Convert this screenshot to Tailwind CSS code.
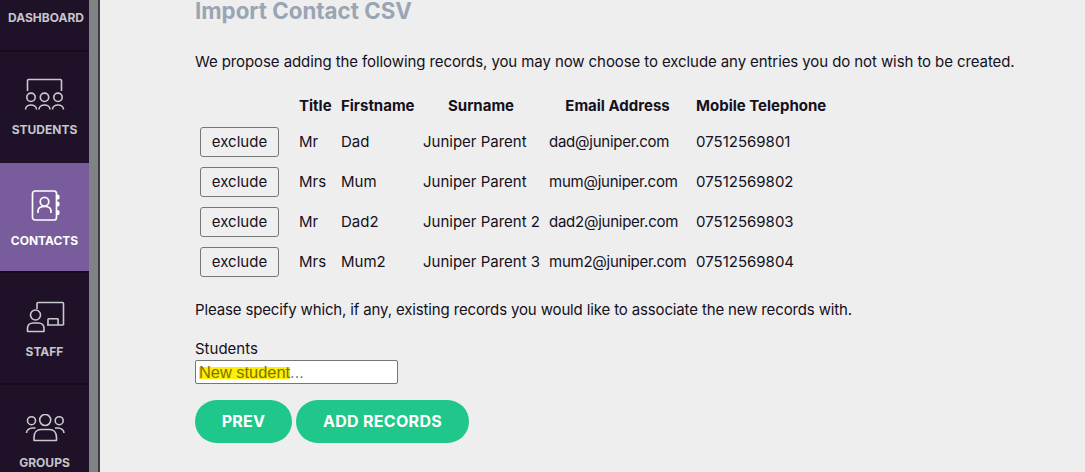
<!DOCTYPE html>
<html><head><meta charset="utf-8">
<script src="https://cdn.jsdelivr.net/npm/@tailwindcss/browser@4"></script>
</head>
<body class="m-0 overflow-hidden">
<div class="flex h-[472px] w-[1085px] overflow-hidden bg-[#eeeeee] font-['Inter','Liberation_Sans',sans-serif] text-[15px] text-[#14101c]">
  <aside class="flex h-[472px] w-[89px] shrink-0 flex-col overflow-hidden bg-[#1f1128] text-[12px] font-bold leading-[16px] text-[#c4c6cc]">
    <div class="flex h-[52px] shrink-0 items-start justify-center border-b-2 border-[#170c1f] pl-[3px] pt-[10px]"><span>DASHBOARD</span></div>
    <div class="flex h-[111px] shrink-0 flex-col items-center pt-[26px]">
      <svg width="41" height="33" viewBox="0 0 41 33" fill="none" stroke="#c9cace" stroke-width="1.6"><path d="M3.500 13V2.500a1 1 0 0 1 1-1h32a1 1 0 0 1 1 1V13"/><circle cx="7" cy="19.300" r="4.200"/><circle cx="20.500" cy="19.300" r="4.200"/><circle cx="34" cy="19.300" r="4.200"/><path d="M1.500 31.500c0-6 11-6 11 0M15 31.500c0-6 11-6 11 0M28.500 31.500c0-6 11-6 11 0"/></svg>
      <span class="mt-[11px]">STUDENTS</span>
    </div>
    <div class="flex h-[108px] shrink-0 flex-col items-center bg-[#785c9c] pt-[27px] text-white">
      <svg width="30" height="32" viewBox="0 0 30 32" fill="none" stroke="#ffffff" stroke-width="1.700"><rect x="2.500" y="1" width="24" height="29" rx="2.500"/><circle cx="14.500" cy="11.700" r="4.300"/><path d="M8 23v-2c0-4 3-4.500 6.500-4.500s6.500 .5 6.500 4.500v2"/><path d="M28 6v2M28 13v2M28 21.500v2" stroke-width="3" stroke-linecap="round"/></svg>
      <span class="mt-[11px]">CONTACTS</span>
    </div>
    <div class="flex h-[114px] shrink-0 flex-col items-center border-b-2 border-t-2 border-[#170c1f] pt-[28px]">
      <svg width="40" height="32" viewBox="0 0 40 32" fill="none" stroke="#c9cace" stroke-width="1.600"><path d="M12 8V2.500a1 1 0 0 1 1-1h24.500a1 1 0 0 1 1 1V24"/><circle cx="10.500" cy="14" r="5"/><path d="M2.500 30.500v-3c0-3.500 2.500-5.500 5.500-5.500h5.500c3 0 5.500 2 5.500 5.500v3z" stroke-linejoin="round"/><path d="M23 24v-5.500a.8.8 0 0 1 .8-.8h8.500a.8.8 0 0 1 .8.8V24M22 24h16.500"/></svg>
      <span class="mt-[11px]">STAFF</span>
    </div>
    <div class="flex flex-1 flex-col items-center pt-[29px]">
      <svg width="40" height="28" viewBox="0 0 40 28" fill="none" stroke="#c9cace" stroke-width="1.600"><circle cx="6.500" cy="6.700" r="4"/><circle cx="20.200" cy="6" r="5.500"/><circle cx="34.200" cy="6.700" r="4"/><path d="M1.500 19c0-3 3-5 6-5h3M39 19c0-3-3-5-6-5h-3"/><path d="M9 26.500v-3c0-5 3-8 7-8h8.500c4 0 7 3 7 8v3z" stroke-linejoin="round"/></svg>
      <span class="mt-[13px]">GROUPS</span>
    </div>
  </aside>
  <div class="h-full w-[9px] shrink-0 bg-[#808285]"></div>
  <div class="h-full w-[2px] shrink-0 bg-[#3b3f44]"></div>
  <main class="min-w-0 flex-1 pl-[95px]">
    <h1 class="text-[22.300px] font-bold leading-[22px] text-[#9aa5b4]">Import Contact CSV</h1>
    <p class="mt-[30px] leading-[20px] tracking-[-0.09px]">We propose adding the following records, you may now choose to exclude any entries you do not wish to be created.</p>
    <table class="mt-[19px] border-collapse text-left">
      <thead>
        <tr class="h-[31px] font-bold">
          <th class="w-[104px] p-0"></th>
          <th class="w-[42px] p-0">Title</th>
          <th class="w-[82px] p-0">Firstname</th>
          <th class="w-[126px] p-0 pr-[10px] text-center">Surname</th>
          <th class="w-[147px] p-0 pr-[10px] text-center">Email Address</th>
          <th class="p-0">Mobile Telephone</th>
        </tr>
      </thead>
      <tbody>
        <tr class="h-[40px]">
          <td class="p-0 pl-[5px]"><button class="h-[30px] w-[79px] rounded-[3px] border border-[#767676] bg-[#efefef] text-center">exclude</button></td>
          <td class="p-0">Mr</td><td class="p-0">Dad</td><td class="p-0">Juniper Parent</td><td class="p-0 tracking-[-0.25px]">dad@juniper.com</td><td class="p-0">07512569801</td>
        </tr>
        <tr class="h-[40px]">
          <td class="p-0 pl-[5px]"><button class="h-[30px] w-[79px] rounded-[3px] border border-[#767676] bg-[#efefef] text-center">exclude</button></td>
          <td class="p-0">Mrs</td><td class="p-0">Mum</td><td class="p-0">Juniper Parent</td><td class="p-0 tracking-[-0.25px]">mum@juniper.com</td><td class="p-0">07512569802</td>
        </tr>
        <tr class="h-[40px]">
          <td class="p-0 pl-[5px]"><button class="h-[30px] w-[79px] rounded-[3px] border border-[#767676] bg-[#efefef] text-center">exclude</button></td>
          <td class="p-0">Mr</td><td class="p-0">Dad2</td><td class="p-0">Juniper Parent 2</td><td class="p-0 tracking-[-0.25px]">dad2@juniper.com</td><td class="p-0">07512569803</td>
        </tr>
        <tr class="h-[40px]">
          <td class="p-0 pl-[5px]"><button class="h-[30px] w-[79px] rounded-[3px] border border-[#767676] bg-[#efefef] text-center">exclude</button></td>
          <td class="p-0">Mrs</td><td class="p-0">Mum2</td><td class="p-0">Juniper Parent 3</td><td class="p-0 tracking-[-0.25px]">mum2@juniper.com</td><td class="p-0">07512569804</td>
        </tr>
      </tbody>
    </table>
    <p class="mt-[18px] leading-[20px] tracking-[-0.14px]">Please specify which, if any, existing records you would like to associate the new records with.</p>
    <div class="mt-[19px] leading-[20px]">Students</div>
    <div class="mt-[1px] flex h-[24px] w-[203px] items-center rounded-[2px] border border-[#767676] bg-white pl-[3px] font-['Liberation_Sans',sans-serif] text-[16.400px] text-[#757575]"><span class="mt-[2px] inline-block h-[12px] bg-[#ffee00] leading-[11px] text-[#7a7400]">New student</span><span class="mt-[1px]">...</span></div>
    <div class="mt-[16px] flex gap-[4px] text-[16px] font-bold tracking-[0.3px] text-white">
      <div class="flex h-[43px] w-[97px] items-center justify-center rounded-full bg-[#1fc78a] pb-[1px]">PREV</div>
      <div class="flex h-[43px] w-[173px] items-center justify-center rounded-full bg-[#1fc78a] pb-[1px]">ADD RECORDS</div>
    </div>
  </main>
</div>
</body></html>
